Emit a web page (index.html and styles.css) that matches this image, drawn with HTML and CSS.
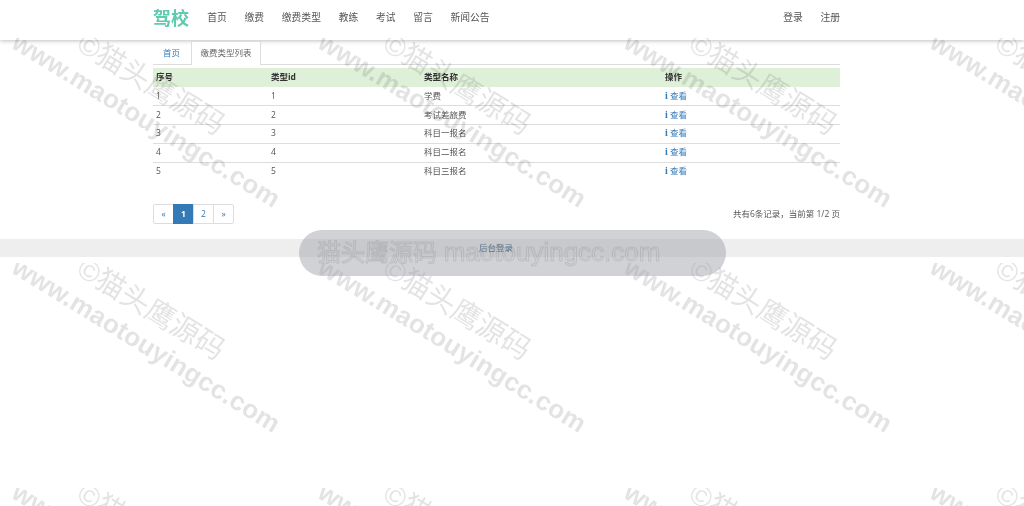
FILE: index.html
```html
<!DOCTYPE html>
<html lang="en">
<head>
    <meta charset="UTF-8">
    <meta name="viewport" content="width=device-width, initial-scale=1.0">
    <title>驾校</title>
    <link rel="stylesheet" href="styles.css">
</head>
<body>
    <!-- Top navigation -->
    <div class="navbar">
        <div class="wrap nav-inner">
            <a class="brand" href="#">驾校</a>
            <a class="nav-link" href="#">首页</a>
            <a class="nav-link" href="#">缴费</a>
            <a class="nav-link" href="#">缴费类型</a>
            <a class="nav-link" href="#">教练</a>
            <a class="nav-link" href="#">考试</a>
            <a class="nav-link" href="#">留言</a>
            <a class="nav-link" href="#">新闻公告</a>
            <a class="nav-link nav-right" href="#">登录</a>
            <a class="nav-link" href="#">注册</a>
        </div>
    </div>

    <div class="wrap">
        <div class="tabs">
            <a class="tab" href="#">首页</a>
            <a class="tab active" href="#">缴费类型列表</a>
        </div>

        <table class="table">
            <thead>
                <tr><th class="col-a">序号</th><th class="col-b">类型id</th><th class="col-c">类型名称</th><th>操作</th></tr>
            </thead>
            <tbody>
                <tr><td>1</td><td>1</td><td>学费</td><td><a href="#"><span class="icon-info">i</span> 查看</a></td></tr>
                <tr><td>2</td><td>2</td><td>考试差旅费</td><td><a href="#"><span class="icon-info">i</span> 查看</a></td></tr>
                <tr><td>3</td><td>3</td><td>科目一报名</td><td><a href="#"><span class="icon-info">i</span> 查看</a></td></tr>
                <tr><td>4</td><td>4</td><td>科目二报名</td><td><a href="#"><span class="icon-info">i</span> 查看</a></td></tr>
                <tr><td>5</td><td>5</td><td>科目三报名</td><td><a href="#"><span class="icon-info">i</span> 查看</a></td></tr>
            </tbody>
        </table>

        <div class="pager-row">
            <div class="pager">
                <a href="#">«</a>
                <a class="current" href="#">1</a>
                <a href="#">2</a>
                <a href="#">»</a>
            </div>
            <span class="pager-info">共有6条记录，当前第 1/2 页</span>
        </div>
    </div>

    <div class="footer"><a href="#">后台登录</a></div>

    <!-- Watermark on top of everything -->
    <svg class="watermark" width="1024" height="506" aria-hidden="true">
        <defs>
            <pattern id="wm" width="306" height="225" y="38" patternUnits="userSpaceOnUse">
                <text class="wm-url" transform="translate(10 9) rotate(31.5)">www.maotouyingcc.com</text>
                <text class="wm-name" transform="translate(75 11) rotate(31.5)">©猫头鹰源码</text>
            </pattern>
        </defs>
        <rect width="1024" height="506" fill="url(#wm)"></rect>
    </svg>

    <div class="pill">猫头鹰源码 <span class="pill-url">maotouyingcc.com</span></div>
</body>
</html>
```

FILE: styles.css
```css
body {
    margin: 0;
    font-family: "Open Sans", "Noto Sans CJK SC", sans-serif;
    font-size: 8.5px;
    color: #555;
    background-color: #fff;
    height: 506px;
    overflow: hidden;
    position: relative;
    filter: blur(0.35px);
}

a {
    text-decoration: none;
    color: #337ab7;
}

.wrap {
    width: 687px;
    margin-left: 153px;
}

.navbar {
    height: 40px;
    background-color: #fff;
    box-shadow: 0 1px 4px rgba(0, 0, 0, 0.25);
}

.nav-inner {
    display: flex;
    align-items: center;
    gap: 17.7px;
    height: 34px;
}

.brand {
    font-size: 18px;
    font-weight: 700;
    color: #5ccbae;
    margin-right: 0.5px;
}

.nav-link {
    font-size: 9.8px;
    color: #555;
}

.nav-right {
    margin-left: auto;
}

.tabs {
    display: flex;
    height: 23px;
    padding-top: 1px;
    border-bottom: 1px solid #ddd;
}

.tab {
    padding: 5px 10px 0;
}

.tab.active {
    color: #666;
    background-color: #fff;
    border: 1px solid #ddd;
    border-bottom: none;
    height: 24px;
    margin-left: 1px;
    padding: 4px 8.5px 0;
    box-sizing: border-box;
}

.table {
    width: 100%;
    margin-top: 3px;
    border-collapse: collapse;
    table-layout: fixed;
    line-height: 12px;
}

.table th {
    box-sizing: border-box;
    height: 19px;
    padding: 0 3px 1px;
    text-align: left;
    color: #333;
    background-color: #dff0d8;
}

.table td {
    box-sizing: border-box;
    height: 18.75px;
    padding: 0 3px 1px;
    border-bottom: 1px solid #ddd;
}

.table tr:last-child td {
    border-bottom: none;
}

.col-a {
    width: 115px;
}

.col-b {
    width: 153px;
}

.col-c {
    width: 241px;
}

.icon-info {
    font-family: "Liberation Serif", serif;
    font-weight: 700;
    font-size: 10px;
}

.pager-row {
    display: flex;
    justify-content: space-between;
    align-items: center;
    margin-top: 23px;
}

.pager {
    display: flex;
}

.pager a {
    box-sizing: border-box;
    width: 21px;
    height: 20px;
    line-height: 18px;
    text-align: center;
    border: 1px solid #ddd;
    margin-left: -1px;
}

.pager a:first-child {
    margin-left: 0;
    border-radius: 2px 0 0 2px;
}

.pager a:last-child {
    border-radius: 0 2px 2px 0;
}

.pager a.current {
    color: #fff;
    font-weight: 700;
    background-color: #337ab7;
    border-color: #337ab7;
}

.pager-info {
    padding-bottom: 2px;
}

.footer {
    margin-top: 15px;
    height: 18px;
    line-height: 18px;
    text-align: center;
    background-color: #eee;
    padding-right: 32px;
}

.footer a {
    color: #23527c;
}

.watermark {
    position: absolute;
    left: 0;
    top: 0;
    pointer-events: none;
}

.wm-url {
    font-family: "Liberation Sans", sans-serif;
    font-size: 26px;
    font-weight: 700;
    letter-spacing: 0.25px;
    fill: rgba(0, 0, 0, 0.11);
}

.wm-name {
    font-family: "Liberation Sans", "Noto Sans CJK SC", sans-serif;
    font-size: 29px;
    fill: rgba(0, 0, 0, 0.11);
}

.pill {
    position: absolute;
    left: 299px;
    top: 230px;
    width: 427px;
    height: 46px;
    line-height: 44px;
    box-sizing: border-box;
    padding-left: 18px;
    border-radius: 23px;
    background-color: rgba(150, 155, 165, 0.45);
    font-family: "Liberation Sans", "Noto Sans CJK SC", sans-serif;
    font-size: 24px;
    white-space: nowrap;
    color: transparent;
    -webkit-text-stroke: 1px rgba(120, 120, 125, 0.22);
    pointer-events: none;
}

.pill-url {
    font-size: 26px;
}
```
